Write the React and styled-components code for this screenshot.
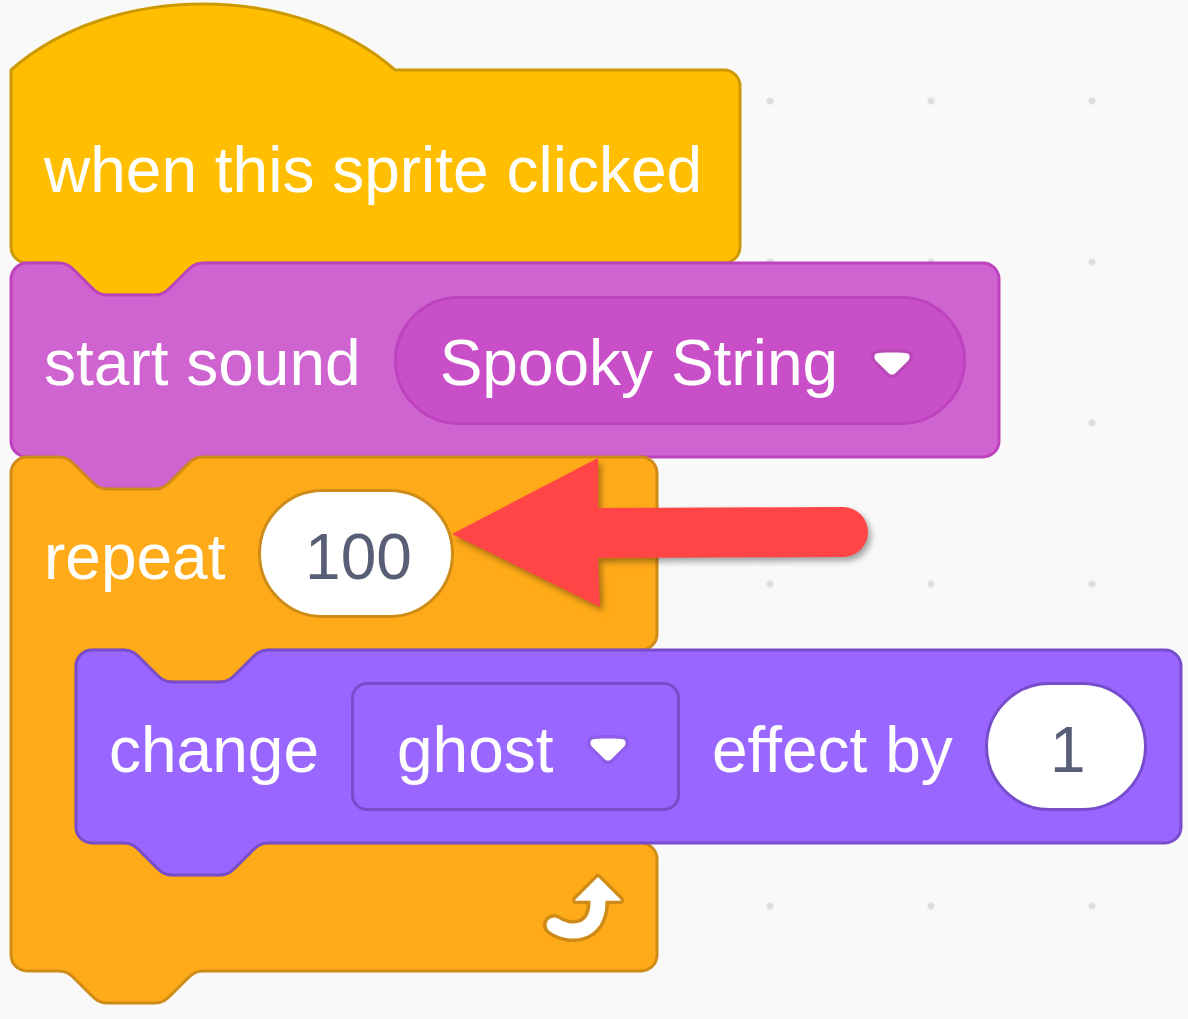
import React from 'react'
import styled, { createGlobalStyle } from 'styled-components'

// notch pieces, scratch-blocks shapes scaled x4
const NOTCH = 'c 8,0 12,4 16,8 l 16,16 c 4,4 8,8 16,8 h 48 c 8,0 12,-4 16,-8 l 16,-16 c 4,-4 8,-8 16,-8'
const TAB = 'c -8,0 -12,4 -16,8 l -16,16 c -4,4 -8,8 -16,8 h -48 c -8,0 -12,-4 -16,-8 l -16,-16 c -4,-4 -8,-8 -16,-8'

const stackPath = (w, h, hat) => {
    const top = hat
        ? `M 0,0 c 100,-88 284,-88 384,0 H ${w - 16}`
        : `M 0,16 A 16,16 0 0 1 16,0 H 48 ${NOTCH} H ${w - 16}`
    return `${top} A 16,16 0 0 1 ${w},16 V ${h - 16} A 16,16 0 0 1 ${w - 16},${h} H 192 ${TAB} H 16 A 16,16 0 0 1 0,${h - 16} Z`
}

const cPath = (w, top, mid, bot) => {
    const y1 = top
    const y2 = top + mid
    const y3 = top + mid + bot
    return `M 0,16 A 16,16 0 0 1 16,0 H 48 ${NOTCH} H ${w - 16} A 16,16 0 0 1 ${w},16 V ${y1 - 16} A 16,16 0 0 1 ${w - 16},${y1}
    H 257 ${TAB} H 81 A 16,16 0 0 0 65,${y1 + 16} V ${y2 - 16} A 16,16 0 0 0 81,${y2}
    H 113 ${NOTCH} H ${w - 16} A 16,16 0 0 1 ${w},${y2 + 16} V ${y3 - 16} A 16,16 0 0 1 ${w - 16},${y3}
    H 192 ${TAB} H 16 A 16,16 0 0 1 0,${y3 - 16} Z`
}

const colors = {
    events: { fill: '#FFBF00', stroke: '#CC9900' },
    sound: { fill: '#CF63CF', field: '#C94FC9', stroke: '#BD42BD' },
    control: { fill: '#FFAB19', stroke: '#CF8B17' },
    looks: { fill: '#9966FF', field: '#9966FF', stroke: '#774DCB' },
}

const GlobalStyle = createGlobalStyle`
    html, body {
        margin: 0;
        padding: 0;
        background: #f9f9f9;
    }
    body {
        font-family: "Liberation Sans", Arial, sans-serif;
    }
`

const Canvas = styled.div`
    position: relative;
    width: 1188px;
    height: 1019px;
    overflow: hidden;
    background-color: #f9f9f9;
    background-image: radial-gradient(circle, #dddddd 0, #dddddd 3px, rgba(221,221,221,0) 4px);
    background-size: 161px 161px;
    background-position: 45.5px 20.5px;
`

const Script = styled.div`
    display: flex;
    flex-direction: column;
    align-items: flex-start;
    padding: 70px 0 0 11px;
`

const Block = styled.div`
    position: relative;
    width: ${p => p.$w}px;
`

const Shape = styled.svg`
    position: absolute;
    left: 0;
    top: 0;
    overflow: visible;
    path {
        stroke-width: 3;
        stroke-linejoin: round;
    }
`

const Row = styled.div`
    position: relative;
    display: flex;
    align-items: center;
    gap: ${p => p.$gap || 33}px;
    height: ${p => p.$h}px;
    padding-left: 33px;
    box-sizing: border-box;
`

const Mouth = styled.div`
    position: relative;
    padding-left: 65px;
`

const Foot = styled.div`
    position: relative;
    display: flex;
    align-items: center;
    justify-content: flex-end;
    height: ${p => p.$h}px;
    padding-right: 33px;
    box-sizing: border-box;
`

const Label = styled.span`
    font-size: 64px;
    line-height: 1;
    color: #fff;
    white-space: nowrap;
    margin-top: 6px;
`

const Field = styled.div`
    display: flex;
    align-items: center;
    gap: 33px;
    flex: none;
    width: ${p => p.$w}px;
    height: 129px;
    box-sizing: border-box;
    padding-left: 43px;
    border: 3px solid ${p => p.$stroke};
    border-radius: ${p => (p.$round ? '65px' : '16px')};
    background: ${p => p.$fill};
`

const NumberInput = styled.div`
    display: flex;
    align-items: center;
    justify-content: center;
    flex: none;
    width: ${p => p.$w}px;
    height: 129px;
    box-sizing: border-box;
    border: 3px solid ${p => p.$stroke};
    border-radius: 65px;
    background: #fff;
    span {
        font-size: 64px;
        line-height: 1;
        color: #575e75;
        margin-top: 6px;
        margin-left: 4px;
    }
`

const CaretSvg = styled.svg`
    flex: none;
    margin-top: 6px;
`

const Pointer = styled.svg`
    position: absolute;
    left: 440px;
    top: 450px;
    overflow: visible;
    filter: drop-shadow(3px 4px 3px rgba(0, 0, 0, 0.35));
`

function Caret() {
    return (
        <CaretSvg width="42" height="29" viewBox="0 0 12.71 8.79">
            <path d="M12.71,2.44A2.41,2.41,0,0,1,12,4.16L8.08,8.08a2.45,2.45,0,0,1-3.45,0L0.72,4.16A2.42,2.42,0,0,1,0,2.44,2.48,2.48,0,0,1,.71.71C1,0.47,1.43,0,6.36,0S11.75,0.46,12,.71A2.44,2.44,0,0,1,12.71,2.44Z" fill="#231f20" opacity=".1" />
            <path d="M6.36,7.79a1.43,1.43,0,0,1-1-.42L1.42,3.45a1.44,1.44,0,0,1,0-2c0.56-.56,9.31-0.56,9.87,0a1.44,1.44,0,0,1,0,2L7.37,7.37A1.43,1.43,0,0,1,6.36,7.79Z" fill="#fff" />
        </CaretSvg>
    )
}

function RepeatIcon() {
    const shaft = 'M 14,53 C 30,64 58,62 58,30'
    const head = '36,28 58,6 80,28'
    return (
        <svg width="84" height="70" viewBox="0 0 84 70">
            <polygon points={head} fill="#CF8B17" stroke="#CF8B17" strokeWidth="8" strokeLinejoin="round" />
            <path d={shaft} fill="none" stroke="#CF8B17" strokeWidth="22" strokeLinecap="round" />
            <path d={shaft} fill="none" stroke="#fff" strokeWidth="15" strokeLinecap="round" />
            <polygon points={head} fill="#fff" stroke="#fff" strokeWidth="1.5" strokeLinejoin="round" />
        </svg>
    )
}

function StackShape({ w, h, hat, c }) {
    return (
        <Shape width={w} height={h}>
            <path d={stackPath(w, h, hat)} fill={c.fill} stroke={c.stroke} />
        </Shape>
    )
}

export default function App() {
    const { events, sound, control, looks } = colors
    return (
        <>
            <GlobalStyle />
            <Canvas>
                <Script>
                    <Block $w={729}>
                        <StackShape w={729} h={193} hat c={events} />
                        <Row $h={193}>
                            <Label>when this sprite clicked</Label>
                        </Row>
                    </Block>

                    <Block $w={988}>
                        <StackShape w={988} h={194} c={sound} />
                        <Row $h={194}>
                            <Label>start sound</Label>
                            <Field $w={572} $round $fill={sound.field} $stroke={sound.stroke}>
                                <Label>Spooky String</Label>
                                <Caret />
                            </Field>
                        </Row>
                    </Block>

                    <Block $w={646}>
                        <Shape width={646} height={514}>
                            <path d={cPath(646, 193, 193, 128)} fill={control.fill} stroke={control.stroke} />
                        </Shape>
                        <Row $h={193}>
                            <Label>repeat</Label>
                            <NumberInput $w={196} $stroke={control.stroke}>
                                <span>100</span>
                            </NumberInput>
                        </Row>
                        <Mouth>
                            <Block $w={1105}>
                                <StackShape w={1105} h={193} c={looks} />
                                <Row $h={193} $gap={32}>
                                    <Label>change</Label>
                                    <Field $w={329} $fill={looks.field} $stroke={looks.stroke}>
                                        <Label>ghost</Label>
                                        <Caret />
                                    </Field>
                                    <Label>effect by</Label>
                                    <NumberInput $w={162} $stroke={looks.stroke}>
                                        <span>1</span>
                                    </NumberInput>
                                </Row>
                            </Block>
                        </Mouth>
                        <Foot $h={128}>
                            <RepeatIcon />
                        </Foot>
                    </Block>
                </Script>

                <Pointer width="440" height="170" viewBox="0 0 440 170">
                    <path d="M 12,84 L 158,8 L 158,58 L 403,57 A 25,25 0 0 1 403,107 L 158,108 L 160,157 Z" fill="#FF4545" />
                </Pointer>
            </Canvas>
        </>
    )
}
